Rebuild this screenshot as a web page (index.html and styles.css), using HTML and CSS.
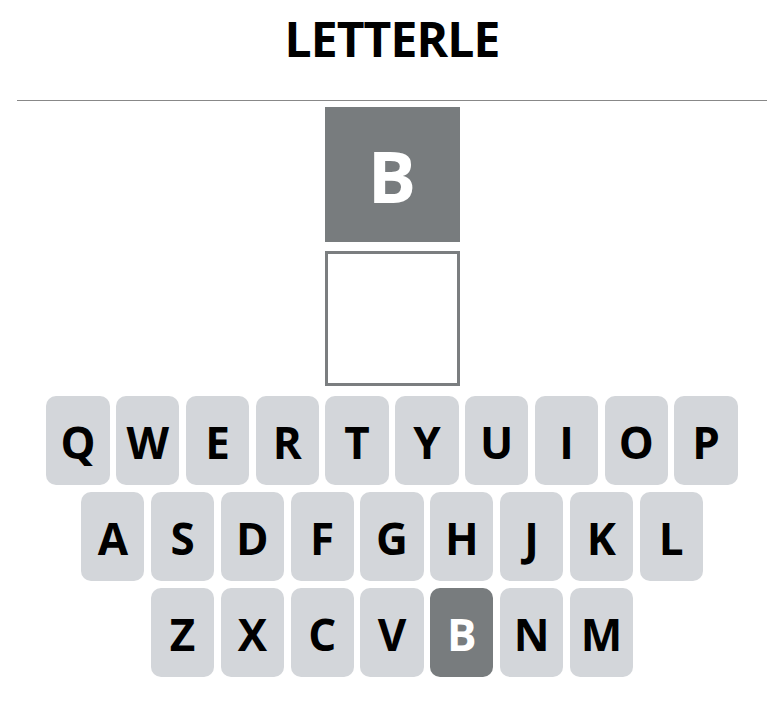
FILE: index.html
```html
<!DOCTYPE html>
<html>
<head>
<meta charset="utf-8">
<link rel="stylesheet" href="styles.css">
</head>
<body>
<div class="app">
  <header class="header">
    <h1 class="title">LETTERLE</h1>
  </header>
  <main class="board">
    <div class="tile filled">B</div>
    <div class="tile empty"></div>
  </main>
  <div class="keyboard">
    <div class="row">
      <div class="key">Q</div><div class="key">W</div><div class="key">E</div><div class="key">R</div><div class="key">T</div><div class="key">Y</div><div class="key">U</div><div class="key">I</div><div class="key">O</div><div class="key">P</div>
    </div>
    <div class="row">
      <div class="key">A</div><div class="key">S</div><div class="key">D</div><div class="key">F</div><div class="key">G</div><div class="key">H</div><div class="key">J</div><div class="key">K</div><div class="key">L</div>
    </div>
    <div class="row">
      <div class="key">Z</div><div class="key">X</div><div class="key">C</div><div class="key">V</div><div class="key used">B</div><div class="key">N</div><div class="key">M</div>
    </div>
  </div>
</div>
</body>
</html>
```
FILE: styles.css
```css
html, body {
  margin: 0;
  padding: 0;
  background: #ffffff;
}
body {
  font-family: "Open Sans", "Noto Sans", "Liberation Sans", sans-serif;
  color: #000000;
}
.app {
  padding: 0 13px 0 17px;
}
.header {
  height: 100px;
  border-bottom: 1px solid #888888;
  box-sizing: content-box;
}
.title {
  margin: 0;
  padding-top: 6px;
  font-size: 48px;
  font-weight: 700;
  letter-spacing: -0.9px;
  text-align: center;
  line-height: 65px;
}
.board {
  display: flex;
  flex-direction: column;
  align-items: center;
  gap: 9px;
  padding-top: 6px;
}
.tile {
  width: 135px;
  height: 135px;
  box-sizing: border-box;
  display: flex;
  align-items: center;
  justify-content: center;
  font-size: 72px;
  font-weight: 700;
  color: #ffffff;
}
.tile.filled {
  background: #787c7e;
}
.tile.empty {
  border: 3px solid #7b7e80;
}
.keyboard {
  margin-top: 10px;
  display: flex;
  flex-direction: column;
  align-items: center;
  gap: 7px;
}
.row {
  display: flex;
  gap: 6.5px;
}
.key {
  width: 63.3px;
  height: 89px;
  box-sizing: border-box;
  padding-top: 2px;
  border-radius: 10px;
  background: #d3d6da;
  display: flex;
  align-items: center;
  justify-content: center;
  font-size: 44px;
  font-weight: 700;
  color: #000000;
}
.key.used {
  background: #787c7e;
  color: #ffffff;
}
```
